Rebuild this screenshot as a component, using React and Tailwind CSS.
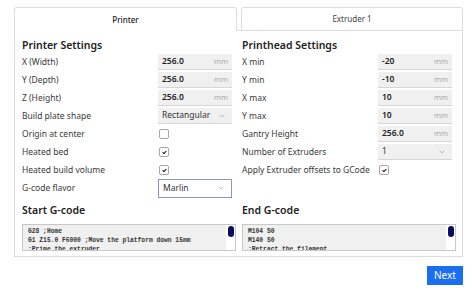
import { ChevronDown, Check } from 'lucide-react'

const LEFT_ROWS = [
  { label: 'X (Width)', type: 'input', value: '256.0' },
  { label: 'Y (Depth)', type: 'input', value: '256.0' },
  { label: 'Z (Height)', type: 'input', value: '256.0' },
  { label: 'Build plate shape', type: 'select', value: 'Rectangular' },
  { label: 'Origin at center', type: 'check', value: false },
  { label: 'Heated bed', type: 'check', value: true },
  { label: 'Heated build volume', type: 'check', value: true },
  { label: 'G-code flavor', type: 'select', value: 'Marlin', focused: true }
]

const RIGHT_ROWS = [
  { label: 'X min', type: 'input', value: '-20' },
  { label: 'Y min', type: 'input', value: '-10' },
  { label: 'X max', type: 'input', value: '10' },
  { label: 'Y max', type: 'input', value: '10' },
  { label: 'Gantry Height', type: 'input', value: '256.0' },
  { label: 'Number of Extruders', type: 'select', value: '1' },
  { label: 'Apply Extruder offsets to GCode', type: 'check', value: true }
]

function Field({ row }) {
  if (row.type === 'input') {
    return (
      <div className="w-[74px] h-[16px] bg-[#f0f0f0] border-b border-[#d6d6d6] flex items-center justify-between pl-[4px] pr-[4px]">
        <span className="text-[8.5px] font-semibold text-[#222]">{row.value}</span>
        <span className="text-[7.5px] text-[#aaa]">mm</span>
      </div>
    )
  }
  if (row.type === 'select') {
    return (
      <div
        className={[
          'w-[74px] flex items-center justify-between pl-[4px] pr-[6px]',
          row.focused
            ? 'h-[19px] bg-white border border-[#8896c0]'
            : 'h-[16px] bg-[#f0f0f0] border-b border-[#d6d6d6]'
        ].join(' ')}
      >
        <span className="text-[8.5px] text-[#333]">{row.value}</span>
        <ChevronDown className="w-[8px] h-[8px] text-[#888]" strokeWidth={1.5} />
      </div>
    )
  }
  return (
    <div className="w-[74px] flex">
      <div className="ml-[1px] w-[10px] h-[10px] rounded-[2px] border border-[#a8a8a8] bg-white flex items-center justify-center">
        {row.value && <Check className="w-[5px] h-[5px] text-black" strokeWidth={5} />}
      </div>
    </div>
  )
}

function Settings({ title, rows }) {
  return (
    <div className="pr-[4px]">
      <h2 className="text-[10.5px] leading-[14px] font-semibold text-[#222]">{title}</h2>
      <div className="mt-[1px]">
        {rows.map((row) => (
          <div key={row.label} className="h-[18px] flex items-center justify-between">
            <span className="text-[8.5px] text-[#3a3a3a]">{row.label}</span>
            <Field row={row} />
          </div>
        ))}
      </div>
    </div>
  )
}

function GCode({ title, lines }) {
  return (
    <div>
      <h2 className="text-[10.5px] leading-[14px] font-semibold text-[#222]">{title}</h2>
      <div className="mt-[7px] h-[27px] border border-[#c8c8c8] flex overflow-hidden">
        <div className="flex-1 bg-[#f0f0f0] pl-[5px] pt-[2px] overflow-hidden">
          {lines.map((l, i) => (
            <div key={i} className="font-['Liberation_Mono',monospace] font-bold text-[6.3px] leading-[9px] text-[#333] whitespace-pre">
              {l}
            </div>
          ))}
        </div>
        <div className="w-[9px] bg-white flex justify-center pt-[1px]">
          <div className="w-[6px] h-[11px] rounded-full bg-[#0c0c5c]" />
        </div>
      </div>
    </div>
  )
}

export default function App() {
  return (
    <div className="w-[474px] h-[295px] bg-white font-['Noto_Sans',sans-serif] pt-[7px] pl-[14px] relative">
      <div className="w-[449px]">
        <div className="flex h-[24px]">
          <div className="w-[223px] border border-b-0 border-[#dcdcdc] rounded-t-[3px] flex items-center justify-center text-[8px] font-medium text-[#222]">
            Printer
          </div>
          <div className="w-[4px] border-b border-[#dcdcdc]" />
          <div className="flex-1 border border-[#dcdcdc] rounded-t-[3px] flex items-center justify-center text-[8px] text-[#444]">
            Extruder 1
          </div>
        </div>
        <div className="h-[226px] border border-t-0 border-[#dcdcdc] pl-[7px] pr-[6px] pt-[7px] grid grid-cols-2 gap-x-[6px] content-start">
          <Settings title="Printer Settings" rows={LEFT_ROWS} />
          <Settings title="Printhead Settings" rows={RIGHT_ROWS} />
          <div className="mt-[6px]">
            <GCode
              title="Start G-code"
              lines={['G28 ;Home', 'G1 Z15.0 F6000 ;Move the platform down 15mm', ';Prime the extruder']}
            />
          </div>
          <div className="mt-[6px]">
            <GCode title="End G-code" lines={['M104 S0', 'M140 S0', ';Retract the filament']} />
          </div>
        </div>
      </div>
      <div className="flex justify-end w-[449px] mt-[9px]">
        <button className="w-[36px] h-[19px] bg-[#1a6ef0] text-white text-[10px] flex items-center justify-center">
          Next
        </button>
      </div>
    </div>
  )
}
